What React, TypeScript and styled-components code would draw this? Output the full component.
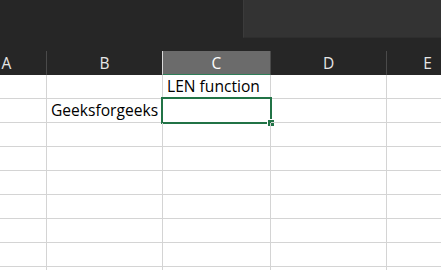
import { FC } from "react";
import styled, { createGlobalStyle } from "styled-components";

const columns = [
	{ key: "A", width: 80 },
	{ key: "B", width: 116 },
	{ key: "C", width: 108 },
	{ key: "D", width: 116 },
	{ key: "E", width: 82 },
];

const cells: Record<string, string> = {
	"C2": "LEN function",
	"B3": "Geeksforgeeks",
};

const selectedCol = "C";
const selectedRow = 3;
const rowCount = 9;

const GlobalStyle = createGlobalStyle`
	html, body {
		margin: 0;
		padding: 0;
		background: #262626;
		overflow: hidden;
	}
`;

const App: FC = () => {
	const template = columns.map((col) => `${col.width}px`).join(" ");

	return (
		<>
			<GlobalStyle />
			<Window>
				<TopBar>
					<RibbonPanel />
				</TopBar>
				<Sheet>
					<HeaderRow $template={template}>
						{columns.map((col) => (
							<ColumnHeader key={col.key} $selected={col.key === selectedCol}>
								{col.key}
							</ColumnHeader>
						))}
					</HeaderRow>
					<Body>
						{Array.from({ length: rowCount }, (_, i) => i + 2).map((row) => (
							<Row key={row} $template={template}>
								{columns.map((col) => {
									const isActive = col.key === selectedCol && row === selectedRow;
									return (
										<Cell key={col.key}>
											{cells[`${col.key}${row}`]}
											{isActive && (
												<ActiveBox>
													<FillHandle />
												</ActiveBox>
											)}
										</Cell>
									);
								})}
							</Row>
						))}
					</Body>
				</Sheet>
			</Window>
		</>
	);
};

export default App;

const Window = styled.div`
	width: 441px;
	height: 270px;
	overflow: hidden;
	display: flex;
	flex-direction: column;
	font-family: "Open Sans", "Liberation Sans", sans-serif;
`;

const TopBar = styled.div`
	height: 51px;
	flex: none;
	display: flex;
	justify-content: flex-end;
	background: #262626;
`;

const RibbonPanel = styled.div`
	width: 198px;
	height: 38px;
	background: #333333;
	border-left: 1px solid #3b3b3b;
	border-bottom: 1px solid #2e2e2e;
	box-sizing: border-box;
`;

const Sheet = styled.div`
	margin-left: -33px;
	display: flex;
	flex-direction: column;
`;

const HeaderRow = styled.div<{ $template: string }>`
	display: grid;
	grid-template-columns: ${({ $template }) => $template};
	height: 24px;
	background: #262626;
`;

const ColumnHeader = styled.div<{ $selected: boolean }>`
	display: flex;
	align-items: center;
	justify-content: center;
	box-sizing: border-box;
	font-size: 15.5px;
	color: ${({ $selected }) => ($selected ? "#ffffff" : "#e6e6e6")};
	background: ${({ $selected }) => ($selected ? "#6b6b6b" : "transparent")};
	border-right: 1px solid #4a4a4a;
	border-bottom: ${({ $selected }) => ($selected ? "2px solid #2e7d58" : "2px solid transparent")};
	padding-top: 1px;

	&:nth-child(2) {
		border-right-color: #d9d9d9;
	}
`;

const Body = styled.div`
	background: #ffffff;
	flex: 1;
`;

const Row = styled.div<{ $template: string }>`
	display: grid;
	grid-template-columns: ${({ $template }) => $template};
	height: 24px;
`;

const Cell = styled.div`
	position: relative;
	box-sizing: border-box;
	border-right: 1px solid #d4d4d4;
	border-bottom: 1px solid #d4d4d4;
	padding: 0 4px;
	font-size: 15.6px;
	line-height: 23px;
	color: #000000;
	white-space: nowrap;
`;

const ActiveBox = styled.div`
	position: absolute;
	left: -2px;
	top: -2px;
	right: -2px;
	bottom: -2px;
	border: 2px solid #217346;
	pointer-events: none;
`;

const FillHandle = styled.div`
	position: absolute;
	right: -5px;
	bottom: -5px;
	width: 6px;
	height: 6px;
	background: #217346;
	border: 1px solid #ffffff;
`;
